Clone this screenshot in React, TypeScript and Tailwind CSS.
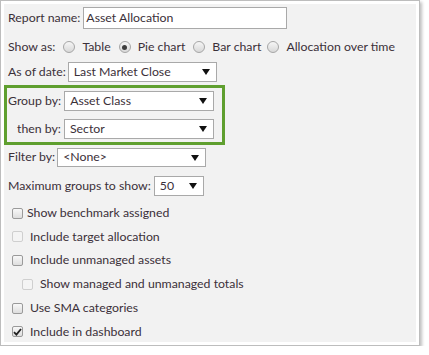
import React from "react";

const txt = "text-[#3b3039]";

function Arrow() {
  return (
    <svg width="8" height="6" viewBox="0 0 8 6" className="shrink-0">
      <path d="M0 0 H8 L4 6 Z" fill="#111" />
    </svg>
  );
}

function Select({ value, w, h = "h-[20px]" }: { value: string; w: string; h?: string }) {
  return (
    <div
      className={`${w} ${h} flex items-center justify-between bg-white border border-[#a9a9a9] pl-[5px] pr-[6px] ${txt}`}
    >
      <span>{value}</span>
      <Arrow />
    </div>
  );
}

function Radio({ checked }: { checked?: boolean }) {
  return (
    <span className="w-[12px] h-[12px] rounded-full border border-[#a6a6a6] bg-gradient-to-b from-[#f6f6f6] to-[#d8d8d8] flex items-center justify-center shrink-0">
      {checked && <span className="w-[5px] h-[5px] rounded-full bg-[#3d3d3d]" />}
    </span>
  );
}

function Check({ checked, disabled }: { checked?: boolean; disabled?: boolean }) {
  return (
    <span
      className={`w-[11px] h-[11px] rounded-[2px] border ${
        disabled ? "border-[#cfcfcf] bg-[#f4f4f4]" : "border-[#9a9a9a] bg-gradient-to-b from-[#f8f8f8] to-[#dedede]"
      } flex items-center justify-center shrink-0`}
    >
      {checked && (
        <svg width="9" height="8" viewBox="0 0 9 8">
          <path d="M1 4.2 L3.4 6.6 L8 1" stroke="#222" strokeWidth="1.8" fill="none" />
        </svg>
      )}
    </span>
  );
}

export default function App() {
  return (
    <div
      className="w-[420px] h-[346px] bg-white border border-[#bdbdbd] p-[3px] shadow-[2px_2px_3px_rgba(0,0,0,0.25)] text-[12.3px] leading-none"
      style={{ fontFamily: "Lato, 'Open Sans', sans-serif" }}
    >
      <div className={`h-full bg-[#f2f2f2] pl-[4px] ${txt}`}>
        <div className="flex flex-col">
          {/* Report name */}
          <div className="mt-[3px] h-[22px] flex items-center">
            <span>Report name:</span>
            <div className={`ml-[3px] w-[204px] h-[22px] bg-white border border-[#a9a9a9] flex items-center pl-[2px] ${txt}`}>
              Asset Allocation
            </div>
          </div>
          {/* Show as */}
          <div className="mt-[8px] h-[20px] flex items-center">
            <span>Show as:</span>
            <span className="ml-[8px]"><Radio /></span>
            <span className="ml-[7px]">Table</span>
            <span className="ml-[8px]"><Radio checked /></span>
            <span className="ml-[7px]">Pie chart</span>
            <span className="ml-[8px]"><Radio /></span>
            <span className="ml-[7px]">Bar chart</span>
            <span className="ml-[6px]"><Radio /></span>
            <span className="ml-[7px]">Allocation over time</span>
          </div>
          {/* As of date */}
          <div className="mt-[5px] h-[20px] flex items-center">
            <span>As of date:</span>
            <div className="ml-[2px]">
              <Select value="Last Market Close" w="w-[149px]" />
            </div>
          </div>
          {/* Green box */}
          <div className="mt-[3px] -ml-[4px] w-[221px] border-[3px] border-[#5f9f2f] pt-[3px] pb-[3px] pl-[1px]">
            <div className="h-[20px] flex items-center">
              <span>Group by:</span>
              <div className="ml-[3px]">
                <Select value="Asset Class" w="w-[150px]" />
              </div>
            </div>
            <div className="mt-[8px] h-[20px] flex items-center">
              <span className="ml-[9px]">then by:</span>
              <div className="ml-[3px]">
                <Select value="Sector" w="w-[150px]" />
              </div>
            </div>
          </div>
          {/* Filter by */}
          <div className="mt-[3px] h-[19px] flex items-center">
            <span>Filter by:</span>
            <div className="ml-[2px]">
              <Select value="<None>" w="w-[149px]" h="h-[19px]" />
            </div>
          </div>
          {/* Max groups */}
          <div className="mt-[9px] h-[20px] flex items-center">
            <span>Maximum groups to show:</span>
            <div className="ml-[3px]">
              <Select value="50" w="w-[50px]" />
            </div>
          </div>
          {/* Checkboxes */}
          <div className="mt-[7px] flex flex-col gap-[3.8px] pl-[4px]">
            <div className="h-[20px] flex items-center">
              <Check />
              <span className="ml-[4px]">Show benchmark assigned</span>
            </div>
            <div className="h-[20px] flex items-center">
              <Check disabled />
              <span className="ml-[7px]">Include target allocation</span>
            </div>
            <div className="h-[20px] flex items-center">
              <Check />
              <span className="ml-[7px]">Include unmanaged assets</span>
            </div>
            <div className="h-[20px] flex items-center pl-[10px]">
              <Check disabled />
              <span className="ml-[7px]">Show managed and unmanaged totals</span>
            </div>
            <div className="h-[20px] flex items-center">
              <Check />
              <span className="ml-[7px]">Use SMA categories</span>
            </div>
            <div className="h-[20px] flex items-center">
              <Check checked />
              <span className="ml-[7px]">Include in dashboard</span>
            </div>
          </div>
        </div>
      </div>
    </div>
  );
}
